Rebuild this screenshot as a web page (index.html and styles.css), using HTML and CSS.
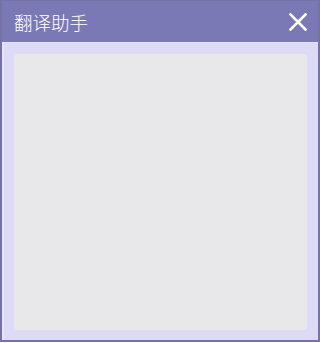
FILE: index.html
```html
<!DOCTYPE html>
<html lang="zh">
<head>
<meta charset="utf-8">
<title>翻译助手</title>
<link rel="stylesheet" href="styles.css">
</head>
<body>
<div class="window">
  <div class="titlebar">
    <span class="title">翻译助手</span>
    <button class="close" aria-label="关闭">
      <svg width="18" height="18" viewBox="0 0 18 18"><path d="M1.5 1.5 L16.5 16.5 M16.5 1.5 L1.5 16.5" stroke="#fff" stroke-width="2.6" stroke-linecap="square" fill="none"/></svg>
    </button>
  </div>
  <div class="content">
    <div class="panel"></div>
  </div>
</div>
</body>
</html>
```
FILE: styles.css
```css
html, body {
  margin: 0;
  padding: 0;
  background: #ffffff;
}
.window {
  box-sizing: border-box;
  width: 320px;
  height: 342px;
  margin: 0;
  border: 2px solid #7472a6;
  border-top-width: 1px;
  display: flex;
  flex-direction: column;
  background: #dcdaf5;
}
.titlebar {
  height: 41px;
  flex: none;
  background: #7b79b5;
  display: flex;
  align-items: center;
  justify-content: space-between;
  padding: 0 11px 0 12px;
  border-bottom: 1px solid #e4e3f8;
}
.title {
  color: #ffffff;
  font-family: "Noto Sans CJK SC", sans-serif;
  font-weight: 300;
  font-size: 18.5px;
  line-height: 1;
  margin-top: 2px;
}
.close {
  border: 0;
  padding: 0;
  background: transparent;
  width: 18px;
  height: 18px;
  display: flex;
}
.content {
  flex: 1;
  display: flex;
  padding: 11px 11px 10px 10px;
  border-left: 2px solid #e6e5fa;
}
.panel {
  flex: 1;
  background: #e8e8eb;
  border-radius: 4px;
}
```
